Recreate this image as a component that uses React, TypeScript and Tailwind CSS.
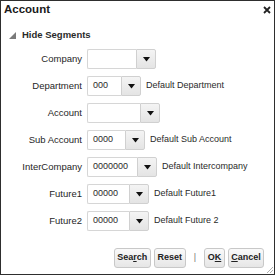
import React from "react";

const rows = [
  { label: "Company", value: "", w: 49, desc: "" },
  { label: "Department", value: "000", w: 34, desc: "Default Department" },
  { label: "Account", value: "", w: 53, desc: "" },
  { label: "Sub Account", value: "0000", w: 38, desc: "Default Sub Account" },
  { label: "InterCompany", value: "0000000", w: 50, desc: "Default Intercompany" },
  { label: "Future1", value: "00000", w: 42, desc: "Default Future1" },
  { label: "Future2", value: "00000", w: 42, desc: "Default Future 2" },
];

function Arrow() {
  return (
    <svg width="7" height="5" viewBox="0 0 7 5">
      <polygon points="0,0 7,0 3.5,4.5" fill="#111" />
    </svg>
  );
}

export default function App() {
  return (
    <div
      className="w-[275px] h-[275px] bg-white border border-[#2e2e2e] relative flex flex-col text-[#333]"
      style={{ fontFamily: '"Liberation Sans", Arial, sans-serif' }}
    >
      <div className="h-[17px] flex items-center justify-between pl-[3px] pr-[3px] pt-[1px]">
        <span className="text-[11.5px] font-bold text-[#1a1a1a]">Account</span>
        <svg width="8" height="8" viewBox="0 0 8 8">
          <path d="M1 1 L7 7 M7 1 L1 7" stroke="#222" strokeWidth="1.8" />
        </svg>
      </div>
      <div className="mt-[11px] h-[12px] flex items-center pl-[8px]">
        <svg width="7" height="7" viewBox="0 0 7 7">
          <polygon points="7,0 7,7 0,7" fill="#7a7a7a" />
        </svg>
        <span className="ml-[6px] text-[9.5px] font-bold text-[#2a2a2a]">Hide Segments</span>
      </div>
      <div className="mt-[8px] flex flex-col gap-[7px]">
        {rows.map((r) => (
          <div key={r.label} className="flex items-center h-[20px]">
            <div className="w-[81px] text-right text-[9.5px] text-[#262626]">{r.label}</div>
            <div className="ml-[5px] flex h-[20px]">
              <div
                className="h-full border border-[#d6d6d6] border-r-0 rounded-l-[2px] bg-white text-[9px] text-[#2a2a2a] flex items-center pl-[5px]"
                style={{ width: r.w }}
              >
                {r.value}
              </div>
              <div className="w-[20px] h-full border border-[#d0d0d0] rounded-r-[2px] bg-gradient-to-b from-[#f4f4f4] to-[#e4e4e4] flex items-center justify-center">
                <Arrow />
              </div>
            </div>
            {r.desc && <span className="ml-[5px] text-[9px] text-[#2a2a2a]">{r.desc}</span>}
          </div>
        ))}
      </div>
      <div className="mt-[17px] flex items-center justify-end pr-[10px] text-[9px] font-bold text-[#222]">
        <button className="w-[37px] h-[20px] border border-[#c8c8c8] rounded-[3px] bg-gradient-to-b from-[#fafafa] to-[#e6e6e6] flex items-center justify-center">
          Sea<span className="underline">r</span>ch
        </button>
        <button className="ml-[3px] w-[32px] h-[20px] border border-[#c8c8c8] rounded-[3px] bg-gradient-to-b from-[#fafafa] to-[#e6e6e6] flex items-center justify-center">
          Reset
        </button>
        <span className="ml-[8px] mr-[8px] font-normal text-[#777]">|</span>
        <button className="w-[21px] h-[20px] border border-[#c8c8c8] rounded-[3px] bg-gradient-to-b from-[#fafafa] to-[#e6e6e6] flex items-center justify-center">
          O<span className="underline">K</span>
        </button>
        <button className="ml-[3px] w-[36px] h-[20px] border border-[#c8c8c8] rounded-[3px] bg-gradient-to-b from-[#fafafa] to-[#e6e6e6] flex items-center justify-center">
          <span className="underline">C</span>ancel
        </button>
      </div>
      <svg className="absolute right-[1px] bottom-[1px]" width="7" height="7" viewBox="0 0 7 7">
        <path d="M7 1 L1 7 M7 4 L4 7" stroke="#b0b0b0" strokeWidth="1" />
      </svg>
    </div>
  );
}
